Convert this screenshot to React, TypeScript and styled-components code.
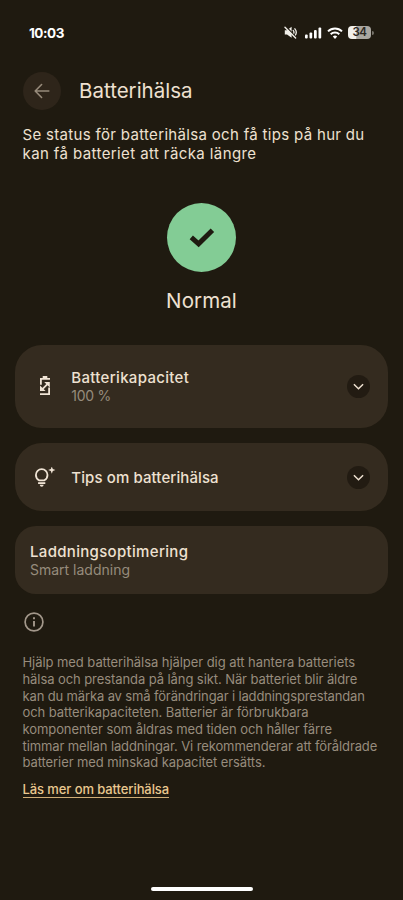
import React from 'react';
import styled, { createGlobalStyle } from 'styled-components';

const GlobalStyle = createGlobalStyle`
  *, *::before, *::after { box-sizing: border-box; }
  body { margin: 0; background: #1f1a10; }
`;

const Screen = styled.div`
  display: flex;
  flex-direction: column;
  width: 403px;
  height: 900px;
  overflow: hidden;
  background: #1f1a10;
  color: #eee1d1;
  font-family: Inter, 'Noto Sans', sans-serif;
`;

const StatusBar = styled.div`
  display: flex;
  align-items: center;
  justify-content: space-between;
  height: 65px;
  padding: 0 29.5px 0 29px;
`;

const Clock = styled.span`
  color: #fff;
  font-size: 13.5px;
  font-weight: 700;
  letter-spacing: -0.45px;
`;

const StatusIcons = styled.div`
  display: flex;
  align-items: center;
  height: 14px;

  svg { display: block; }
`;

const MuteSlot = styled.div`margin-right: 8px;`;
const SignalSlot = styled.div`margin-right: 5px;`;
const WifiSlot = styled.div`margin-right: 5px;`;

const Battery = styled.div`
  display: flex;
  align-items: center;
  gap: 1px;
`;

const BatteryBody = styled.div`
  width: 23px;
  height: 13px;
  border-radius: 4px;
  background: linear-gradient(90deg, #f1f0ec 0 34%, #aaa7a1 38% 100%);
  color: #2b271f;
  font-size: 11.5px;
  font-weight: 600;
  line-height: 13px;
  letter-spacing: -0.4px;
  text-align: center;
`;

const BatteryTip = styled.div`
  width: 1.5px;
  height: 4px;
  border-radius: 0 2px 2px 0;
  background: #77736b;
`;

const Header = styled.header`
  display: flex;
  align-items: center;
  gap: 18.5px;
  height: 38px;
  margin: 7px 0 0 22.5px;
`;

const BackButton = styled.button`
  display: grid;
  place-items: center;
  width: 38px;
  height: 38px;
  padding: 0;
  border: 0;
  border-radius: 50%;
  background: #2e251a;
  color: #978b7b;

  svg { display: block; }
`;

const Title = styled.h1`
  margin: 0;
  font-size: 20.5px;
  font-weight: 400;
  line-height: 24px;
  letter-spacing: 0;
`;

const Intro = styled.p`
  margin: 15.4px 0 0 22.5px;
  font-size: 15px;
  line-height: 19px;
`;

const Line = styled.span<{ $track: number }>`
  display: block;
  white-space: nowrap;
  letter-spacing: ${p => p.$track}px;
`;

const Status = styled.section`
  display: flex;
  flex-direction: column;
  align-items: center;
  margin-top: 40.1px;
`;

const StatusBadge = styled.div`
  display: grid;
  place-items: center;
  width: 69px;
  height: 69px;
  border-radius: 50%;
  background: #83cc95;

  svg { display: block; }
`;

const StatusLabel = styled.div`
  margin-top: 16.5px;
  font-size: 20.5px;
  line-height: 24px;
  letter-spacing: 0.1px;
`;

const Cards = styled.div`
  display: flex;
  flex-direction: column;
  gap: 15.2px;
  margin: 32px 15px 0;
`;

const Card = styled.section<{ $height: number; $radius: number }>`
  display: flex;
  align-items: center;
  height: ${p => p.$height}px;
  padding: 0 18.5px 0 15px;
  border-radius: ${p => p.$radius}px;
  background: #342b1f;
`;

const CardIcon = styled.div`
  display: grid;
  place-items: center;
  width: 30px;
  margin-right: 11.3px;

  svg { display: block; }
`;

const CardText = styled.div`flex: 1;`;

const CardTitle = styled.div<{ $track: number }>`
  font-size: 15px;
  font-weight: 500;
  line-height: 19px;
  letter-spacing: ${p => p.$track}px;
`;

const CardSub = styled.div<{ $track: number }>`
  color: #968b7c;
  font-size: 14px;
  line-height: 18px;
  letter-spacing: ${p => p.$track}px;
`;

const Expand = styled.button`
  display: grid;
  place-items: center;
  width: 23px;
  height: 23px;
  padding: 0;
  border: 0;
  border-radius: 50%;
  background: #221b12;
  color: #eee1d1;

  svg { display: block; }
`;

const InfoIcon = styled.div`
  height: 24px;
  margin: 16px 0 0 21.7px;
  color: #a2978a;

  svg { display: block; }
`;

const Details = styled.p`
  margin: 20px 0 0 22.5px;
  color: #978c7d;
  font-size: 13px;
  line-height: 16.67px;
`;

const MoreLink = styled.a`
  align-self: flex-start;
  margin: 9.6px 0 0 22.5px;
  border-bottom: 1px solid #cfad76;
  color: #e9c88f;
  font-size: 13px;
  font-weight: 500;
  line-height: 16px;
  letter-spacing: -0.09px;
  text-decoration: none;
`;

const HomeIndicator = styled.div`
  width: 102px;
  height: 4px;
  margin: auto auto 9.5px;
  border-radius: 2px;
  background: #fff;
`;

const MuteIcon = () => (
  <svg width="13" height="13" viewBox="0 0 13 13" fill="none" stroke="#f0eee8" strokeLinecap="round">
    <path d="M.8 4.3h2.200L7.600.8v11L3 8.500H.8z" fill="#f0eee8" stroke="none" />
    <path d="M9.200 4.400c.8 1 .8 2.800 0 3.800M10.900 2.800c1.600 2 1.600 5 0 7" strokeWidth="1.300" />
    <path d="M1.800.6l10.500 11" stroke="#1f1a10" strokeWidth="1.500" />
    <path d="M1 1.200l10.600 10.900" strokeWidth="1.400" />
  </svg>
);

const SignalIcon = () => (
  <svg width="17" height="12" viewBox="0 0 17 12" fill="#fff">
    <rect x="0" y="7.5" width="2.7" height="4" rx="1" />
    <rect x="4.5" y="5.4" width="2.7" height="6.1" rx="1" />
    <rect x="9" y="3" width="2.7" height="8.5" rx="1" />
    <rect x="13.5" y="0.5" width="2.7" height="11" rx="1" />
  </svg>
);

const WifiIcon = () => (
  <svg width="16" height="12" viewBox="0 0 16 12" fill="none" stroke="#fff" strokeWidth="2">
    <path d="M1 4.4a10 10 0 0 1 14 0" />
    <path d="M3.7 7.3a6.2 6.2 0 0 1 8.6 0" />
    <path d="M8 11.9l-2.2-2.3a3.2 3.2 0 0 1 4.4 0z" fill="#fff" stroke="none" />
  </svg>
);

const ArrowLeft = () => (
  <svg width="16" height="16" viewBox="0 0 16 16" fill="none" stroke="currentColor" strokeWidth="1.6" strokeLinecap="round" strokeLinejoin="round">
    <path d="M14.8 8H1.4M7.600 1.500L1.200 8l6.400 6.500" />
  </svg>
);

const Check = () => (
  <svg width="26" height="22" viewBox="0 0 26 22" fill="none" stroke="#1f1a10" strokeWidth="4.900">
    <path d="M2.300 10.300L9.600 16.800L23.400 3.200" />
  </svg>
);

const BatteryIcon = () => (
  <svg width="12" height="20" viewBox="0 0 12 20" fill="none" stroke="#f0e4d5" strokeWidth="1.8">
    <path d="M3.700 0h4.600v2.200H3.700z" fill="#f0e4d5" stroke="none" />
    <path d="M1.900 8.800V2.900H11" />
    <path d="M10.100 11.600v6.500H1" />
    <path d="M3.200 13.400l6-6" />
    <path d="M5.200 5.900h5.600v5.600zM1 9.500v5.600h5.600z" fill="#f0e4d5" stroke="none" />
  </svg>
);

const BulbIcon = () => (
  <svg width="22" height="20" viewBox="0 0 22 20" fill="none" stroke="#f0e4d5" strokeWidth="1.8">
    <path d="M5 13.300C3.200 12.200 1.900 10.300 1.900 8a5.800 5.800 0 0 1 11.600 0c0 2.300-1.300 4.200-3.100 5.300z" />
    <path d="M4.100 16.100h7.200" />
    <path d="M5.800 17.800h3.800c0 1.200-.9 1.900-1.900 1.900s-1.900-.7-1.900-1.900z" fill="#f0e4d5" stroke="none" />
    <path d="M17.800-.5l1 2.600 2.600 1-2.600 1-1 2.600-1-2.600-2.600-1 2.600-1z" fill="#f0e4d5" stroke="none" />
  </svg>
);

const ChevronDown = () => (
  <svg width="11" height="7" viewBox="0 0 11 7" fill="none" stroke="currentColor" strokeWidth="1.5">
    <path d="M.9 1.200l4.600 4.500 4.600-4.500" />
  </svg>
);

const Info = () => (
  <svg width="24" height="24" viewBox="0 0 24 24" fill="none" stroke="currentColor">
    <circle cx="12" cy="12" r="8.900" strokeWidth="1.700" />
    <path d="M12 11v5.600M12 7.300v1.900" strokeWidth="1.900" />
  </svg>
);

const introLines: [string, number][] = [
  ['Se status för batterihälsa och få tips på hur du', 0.32],
  ['kan få batteriet att räcka längre', 0.4],
];

const detailLines: [string, number][] = [
  ['Hjälp med batterihälsa hjälper dig att hantera batteriets', -0.06],
  ['hälsa och prestanda på lång sikt. När batteriet blir äldre', -0.08],
  ['kan du märka av små förändringar i laddningsprestandan', -0.14],
  ['och batterikapaciteten. Batterier är förbrukbara', -0.06],
  ['komponenter som åldras med tiden och håller färre', -0.09],
  ['timmar mellan laddningar. Vi rekommenderar att föråldrade', -0.11],
  ['batterier med minskad kapacitet ersätts.', -0.09],
];

const renderLines = (lines: [string, number][]) =>
  lines.map(([text, track]) => <Line key={text} $track={track}>{text} </Line>);

export default function App() {
  return (
    <>
      <GlobalStyle />
      <Screen>
        <StatusBar>
          <Clock>10:03</Clock>
          <StatusIcons>
            <MuteSlot><MuteIcon /></MuteSlot>
            <SignalSlot><SignalIcon /></SignalSlot>
            <WifiSlot><WifiIcon /></WifiSlot>
            <Battery>
              <BatteryBody>34</BatteryBody>
              <BatteryTip />
            </Battery>
          </StatusIcons>
        </StatusBar>

        <Header>
          <BackButton aria-label="Tillbaka"><ArrowLeft /></BackButton>
          <Title>Batterihälsa</Title>
        </Header>

        <Intro>{renderLines(introLines)}</Intro>

        <Status>
          <StatusBadge><Check /></StatusBadge>
          <StatusLabel>Normal</StatusLabel>
        </Status>

        <Cards>
          <Card $height={83} $radius={27}>
            <CardIcon><BatteryIcon /></CardIcon>
            <CardText>
              <CardTitle $track={0.32}>Batterikapacitet</CardTitle>
              <CardSub $track={-0.3}>100 %</CardSub>
            </CardText>
            <Expand aria-label="Visa mer"><ChevronDown /></Expand>
          </Card>
          <Card $height={68} $radius={27}>
            <CardIcon><BulbIcon /></CardIcon>
            <CardText>
              <CardTitle $track={0.1}>Tips om batterihälsa</CardTitle>
            </CardText>
            <Expand aria-label="Visa mer"><ChevronDown /></Expand>
          </Card>
          <Card $height={68} $radius={21}>
            <CardText>
              <CardTitle $track={0.32}>Laddningsoptimering</CardTitle>
              <CardSub $track={0}>Smart laddning</CardSub>
            </CardText>
          </Card>
        </Cards>

        <InfoIcon><Info /></InfoIcon>
        <Details>{renderLines(detailLines)}</Details>
        <MoreLink href="#">Läs mer om batterihälsa</MoreLink>
        <HomeIndicator />
      </Screen>
    </>
  );
}
